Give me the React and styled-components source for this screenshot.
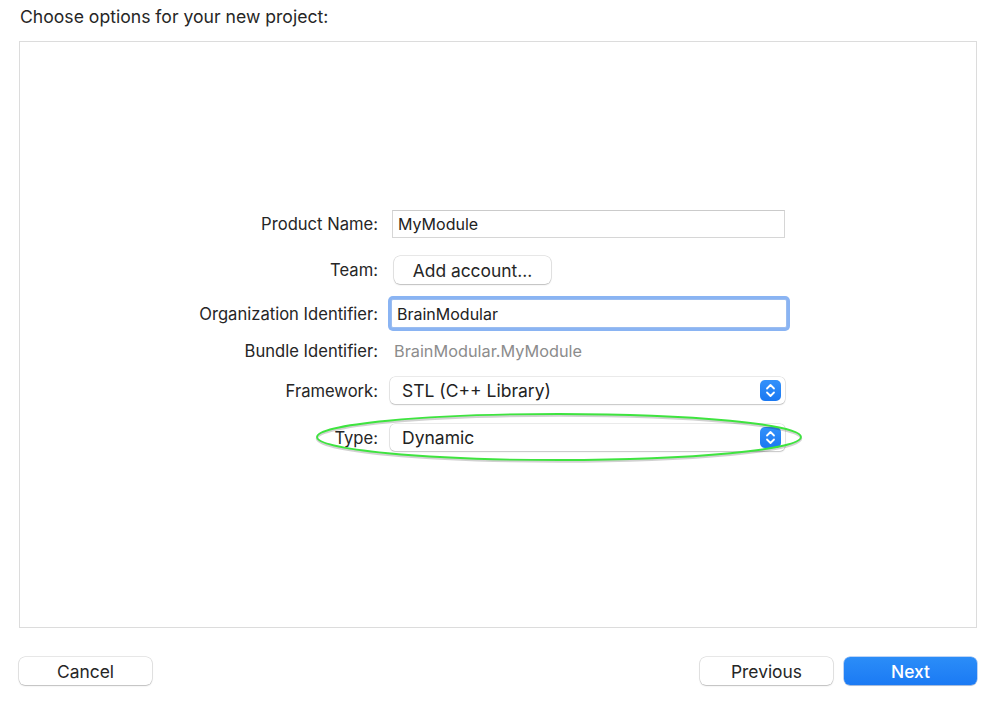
import React from 'react';
import styled, { createGlobalStyle } from 'styled-components';

const GlobalStyle = createGlobalStyle`
  html, body {
    margin: 0;
    padding: 0;
    background: #ffffff;
  }
  body {
    font-family: Inter, "Noto Sans", "Liberation Sans", sans-serif;
    color: #262626;
    -webkit-font-smoothing: antialiased;
  }
`;

const Page = styled.div`
  width: 992px;
  height: 702px;
  display: flex;
  flex-direction: column;
  box-sizing: border-box;
  padding: 7px 15px 0 19px;
`;

const Heading = styled.div`
  font-size: 17.6px;
  line-height: 20px;
  height: 34px;
  padding-left: 1px;
  color: #262626;
`;

const Panel = styled.div`
  width: 958px;
  height: 587px;
  box-sizing: border-box;
  border: 1px solid #dcdcdc;
  background: #ffffff;
  padding-top: 168px;
`;

const Row = styled.div`
  position: relative;
  display: grid;
  grid-template-columns: 358px 393px;
  column-gap: 14px;
  align-items: center;
  margin-top: ${({ $top }) => $top || 0}px;
`;

const Label = styled.div`
  text-align: right;
  font-size: 16.6px;
  line-height: 20px;
  color: #262626;
`;

const TextField = styled.div`
  height: 28px;
  box-sizing: border-box;
  border: 1px solid #d6d6d6;
  border-top-color: #cbcbcb;
  background: #fff;
  padding-left: 5px;
  display: flex;
  align-items: center;
  font-size: 16px;
  color: #222;
  ${({ $focused }) =>
    $focused &&
    `
    height: 29px;
    margin-left: -1px;
    margin-right: -2px;
    border-color: #9bbdf0;
    border-radius: 2px;
    box-shadow: 0 0 0 3px #8ab4f3;
  `}
`;

const PushButton = styled.button`
  width: ${({ $w }) => $w || 133}px;
  height: 28px;
  margin-left: ${({ $shift }) => $shift || 0}px;
  border: none;
  border-radius: 6px;
  font-family: inherit;
  font-size: 17.4px;
  font-weight: ${({ $primary }) => ($primary ? 500 : 400)};
  color: ${({ $primary }) => ($primary ? '#ffffff' : '#262626')};
  background: ${({ $primary }) =>
    $primary ? 'linear-gradient(#2b8df8, #1b7af4)' : '#ffffff'};
  box-shadow: ${({ $primary }) =>
    $primary
      ? '0 0 0 0.5px rgba(0,90,220,0.5), 0 1px 1px rgba(0,0,0,0.15)'
      : '0 0 0 0.5px rgba(0,0,0,0.18), 0 1px 1.5px rgba(0,0,0,0.18)'};
  padding: 0;
  display: flex;
  align-items: center;
  justify-content: center;
`;

const Value = styled.div`
  font-size: 16.3px;
  line-height: 20px;
  padding-left: 2px;
  color: #8c8c8c;
`;

const Popup = styled.div`
  height: 27px;
  box-sizing: border-box;
  margin-left: -2px;
  border-radius: 5px;
  background: #fff;
  box-shadow: 0 0 0 0.5px rgba(0, 0, 0, 0.16), 0 1px 1.5px rgba(0, 0, 0, 0.16);
  display: flex;
  align-items: center;
  justify-content: space-between;
  padding: 0 4px 0 12px;
  font-size: 17.5px;
  color: #222;
`;

const Stepper = styled.div`
  width: 21px;
  height: 21px;
  border-radius: 5px;
  background: linear-gradient(#3391fa, #1a78f2);
  display: flex;
  align-items: center;
  justify-content: center;
`;

const Highlight = styled.svg`
  position: absolute;
  left: 294px;
  top: -13px;
  overflow: visible;
  pointer-events: none;
`;

const Footer = styled.div`
  display: flex;
  align-items: center;
  margin-top: 29px;
  width: 958px;
`;

const Spacer = styled.div`
  flex: 1;
`;

const ButtonGroup = styled.div`
  display: flex;
  gap: 11px;
`;

const StepperIcon = () => (
  <Stepper>
    <svg width="11" height="15" viewBox="0 0 11 15" fill="none">
      <path d="M2 5.5 L5.5 2 L9 5.5" stroke="#fff" strokeWidth="1.8" strokeLinecap="round" strokeLinejoin="round" />
      <path d="M2 9.5 L5.5 13 L9 9.5" stroke="#fff" strokeWidth="1.8" strokeLinecap="round" strokeLinejoin="round" />
    </svg>
  </Stepper>
);

const App = () => {
  return (
    <>
      <GlobalStyle />
      <Page>
        <Heading>Choose options for your new project:</Heading>
        <Panel>
          <Row>
            <Label>Product Name:</Label>
            <TextField>MyModule</TextField>
          </Row>
          <Row $top={18}>
            <Label>Team:</Label>
            <PushButton $w={157} $shift={2}>Add account...</PushButton>
          </Row>
          <Row $top={15}>
            <Label>Organization Identifier:</Label>
            <TextField $focused>BrainModular</TextField>
          </Row>
          <Row $top={13}>
            <Label>Bundle Identifier:</Label>
            <Value>BrainModular.MyModule</Value>
          </Row>
          <Row $top={16}>
            <Label>Framework:</Label>
            <Popup>
              STL (C++ Library)
              <StepperIcon />
            </Popup>
          </Row>
          <Row $top={20}>
            <Label>Type:</Label>
            <Popup>
              Dynamic
              <StepperIcon />
            </Popup>
            <Highlight width="490" height="52" viewBox="0 0 490 52">
              <ellipse cx="245" cy="27.5" rx="242" ry="23" fill="none" stroke="rgba(0,0,0,0.18)" strokeWidth="2.5" />
              <ellipse cx="245" cy="26" rx="242" ry="23" fill="none" stroke="#3ee43f" strokeWidth="1.8" />
            </Highlight>
          </Row>
        </Panel>
        <Footer>
          <PushButton>Cancel</PushButton>
          <Spacer />
          <ButtonGroup>
            <PushButton>Previous</PushButton>
            <PushButton $primary>Next</PushButton>
          </ButtonGroup>
        </Footer>
      </Page>
    </>
  );
};

export default App;
